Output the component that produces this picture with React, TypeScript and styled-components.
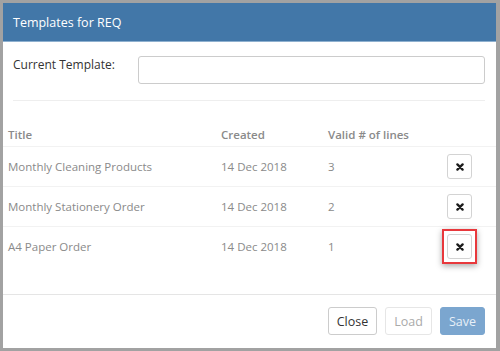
import React from 'react';
import styled, { createGlobalStyle } from 'styled-components';

type Template = {
  title: string
  created: string
  lines: number
  highlighted?: boolean
}

const templates: Template[] = [
  { title: 'Monthly Cleaning Products', created: '14 Dec 2018', lines: 3 },
  { title: 'Monthly Stationery Order', created: '14 Dec 2018', lines: 2 },
  { title: 'A4 Paper Order', created: '14 Dec 2018', lines: 1, highlighted: true },
];

const CrossIcon = () => (
  <svg width="8" height="8" viewBox="0 0 8 8">
    <path d="M1.4 1.4 L6.6 6.6 M6.6 1.4 L1.4 6.6" stroke="#1c1c1c" strokeWidth="2.3" strokeLinecap="round" />
  </svg>
);

export default function App() {
  return (
    <>
      <GlobalStyle />
      <StyledFrame>
        <StyledDialog>
          <StyledHeader>Templates for REQ</StyledHeader>
          <StyledBody>
            <StyledFormRow>
              <StyledLabel>Current Template:</StyledLabel>
              <StyledInput type="text" />
            </StyledFormRow>
            <StyledDivider />
            <StyledTable>
              <thead>
                <tr>
                  <StyledTh>Title</StyledTh>
                  <StyledTh>Created</StyledTh>
                  <StyledTh>Valid # of lines</StyledTh>
                  <StyledTh />
                </tr>
              </thead>
              <tbody>
                {templates.map((t) => (
                  <tr key={t.title}>
                    <StyledTd>{t.title}</StyledTd>
                    <StyledTd>{t.created}</StyledTd>
                    <StyledTd>{t.lines}</StyledTd>
                    <StyledActionTd>
                      <StyledHighlight $active={t.highlighted}>
                        <StyledDeleteButton>
                          <CrossIcon />
                        </StyledDeleteButton>
                      </StyledHighlight>
                    </StyledActionTd>
                  </tr>
                ))}
              </tbody>
            </StyledTable>
          </StyledBody>
          <StyledFooter>
            <StyledButton>Close</StyledButton>
            <StyledButton $variant="disabled">Load</StyledButton>
            <StyledButton $variant="primary">Save</StyledButton>
          </StyledFooter>
        </StyledDialog>
      </StyledFrame>
    </>
  );
}

const GlobalStyle = createGlobalStyle`
  html, body {
    margin: 0;
    padding: 0;
    background: #a2a2a2;
  }
  body {
    font-family: "Open Sans", "DejaVu Sans", sans-serif;
  }
`;

const StyledFrame = styled.div`
  width: 500px;
  height: 351px;
  box-sizing: border-box;
  padding: 3px 4px 3px 3px;
  background: #a2a2a2;
`;

const StyledDialog = styled.div`
  height: 100%;
  background: #fff;
  display: flex;
  flex-direction: column;
`;

const StyledHeader = styled.div`
  height: 39px;
  box-sizing: border-box;
  background: #4277a8;
  border-bottom: 1px solid #8eb0cf;
  color: #fff;
  font-size: 12.5px;
  padding: 0 10px;
  display: flex;
  align-items: center;
`;

const StyledBody = styled.div`
  flex: 1;
  display: flex;
  flex-direction: column;
`;

const StyledFormRow = styled.div`
  display: flex;
  align-items: center;
  padding: 14px 11px 0 10px;
`;

const StyledLabel = styled.label`
  width: 125px;
  font-size: 12px;
  color: #333;
  margin-top: -12px;
`;

const StyledInput = styled.input`
  flex: 1;
  height: 28px;
  box-sizing: border-box;
  border: 1px solid #ccc;
  border-radius: 3px;
  outline: none;
`;

const StyledDivider = styled.div`
  height: 1px;
  background: #eee;
  margin: 16px 11px 0 10px;
`;

const StyledTable = styled.table`
  width: 100%;
  border-collapse: collapse;
  margin-top: 17px;
  font-size: 11.5px;
  color: #8a8a8a;
`;

const StyledTh = styled.th`
  text-align: left;
  font-weight: 600;
  padding: 9px 5px 4px 5px;
  border-bottom: 1px solid #f2f2f2;

  &:first-child { width: 203px; }
  &:nth-child(2) { width: 97px; }
`;

const StyledTd = styled.td`
  padding: 0 5px;
  height: 39px;
  border-bottom: 1px solid #f2f2f2;

  tr:last-child > & { border-bottom: none; }
`;

const StyledActionTd = styled(StyledTd)`
  width: 40px;
  padding: 0 19px 0 0;
  text-align: right;
`;

const StyledHighlight = styled.span<{ $active?: boolean }>`
  display: inline-flex;
  vertical-align: middle;
  padding: 3px;
  border: 2px solid ${({ $active }) => ($active ? '#e8383c' : 'transparent')};
  box-shadow: ${({ $active }) => ($active ? '0 2px 6px rgba(0, 0, 0, 0.35)' : 'none')};
`;

const StyledDeleteButton = styled.button`
  width: 25px;
  height: 25px;
  padding: 0;
  display: inline-flex;
  align-items: center;
  justify-content: center;
  background: #fff;
  border: 1px solid #d3d3d3;
  border-radius: 3px;
`;

const StyledFooter = styled.div`
  border-top: 1px solid #e5e5e5;
  display: flex;
  justify-content: flex-end;
  gap: 8px;
  padding: 12px 11px 13px 10px;
`;

const StyledButton = styled.button<{ $variant?: 'default' | 'disabled' | 'primary' }>`
  height: 28px;
  padding: 0 8px;
  font-family: inherit;
  font-size: 12.5px;
  border-radius: 3px;
  border: 1px solid #ccc;
  background: #fff;
  color: #333;
  ${({ $variant }) => $variant === 'disabled' && `
    color: #aaa;
    border-color: #e6e6e6;
  `}
  ${({ $variant }) => $variant === 'primary' && `
    color: #e8f0f8;
    background: #7ba6cf;
    border-color: #7ba6cf;
  `}
`;
